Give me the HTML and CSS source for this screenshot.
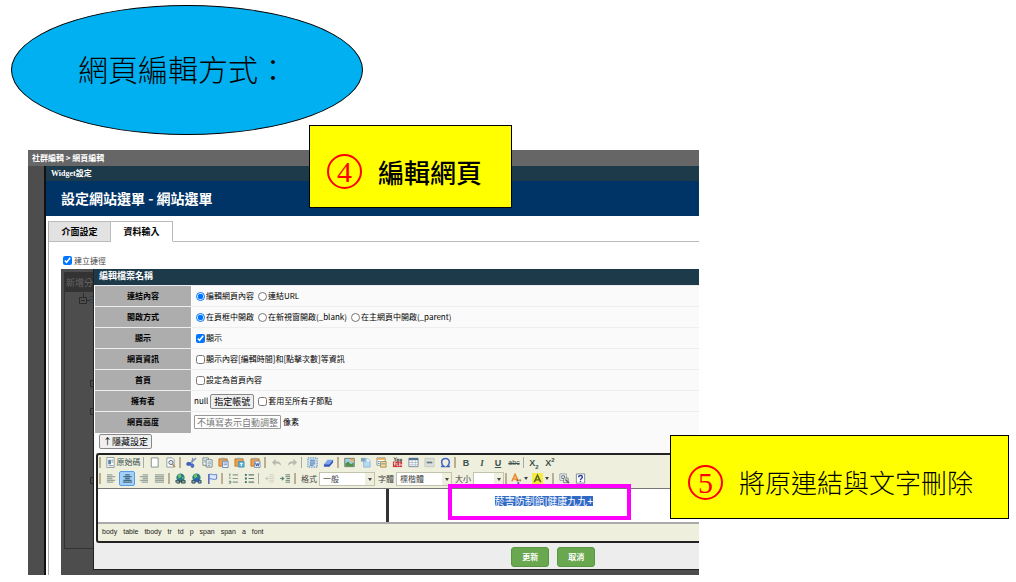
FILE: index.html
```html
<!DOCTYPE html>
<html lang="zh-Hant">
<head>
    <meta charset="UTF-8">
    <meta name="viewport" content="width=device-width, initial-scale=1.0">
    <title>網頁編輯方式</title>
    <link rel="stylesheet" href="styles.css">
</head>
<body>
    <!-- toolbar icons -->
    <svg class="sprite" aria-hidden="true">
        <symbol id="i-source" viewBox="0 0 12 12"><path d="M2 .5h8v11H2z" fill="#fff" stroke="#8b9a9a"/><path d="M3.500 3h3v5h-3z" fill="#5b86a8"/><path d="M7 3.500h2M7 5.500h2M4 9.500h5" stroke="#789"/></symbol>
        <symbol id="i-new" viewBox="0 0 12 12"><path d="M2.500 1h7.500v10h-7.500z" fill="#fff" stroke="#7d8c8c"/></symbol>
        <symbol id="i-preview" viewBox="0 0 12 12"><path d="M2 1h6l2 2v8H2z" fill="#fff" stroke="#8b9a9a"/><circle cx="6.500" cy="6" r="2.300" fill="#dde8ee" stroke="#667"/><path d="M8 8l3 3" stroke="#b08a50" stroke-width="1.600"/></symbol>
        <symbol id="i-cut" viewBox="0 0 12 12"><path d="M11 1L4 8M7.500 1L6 7" stroke="#7f93b8" stroke-width="1.500"/><ellipse cx="3" cy="7.500" rx="2" ry="1.400" fill="#4d70cb" stroke="#3358bd" stroke-width="1.500"/><ellipse cx="7" cy="9.500" rx="1.500" ry="2" fill="#4d70cb" stroke="#3358bd"/></symbol>
        <symbol id="i-copy" viewBox="0 0 12 12"><path d="M1 1h6v8H1z" fill="#fff" stroke="#6f8282"/><path d="M4.500 3h6.500v8H4.500z" fill="#fff" stroke="#6f8282"/><path d="M6 5.500h4M6 7.500h4M6 9.500h3M2 3.500h2M2 5.500h2" stroke="#6b8b9e"/></symbol>
        <symbol id="i-paste" viewBox="0 0 12 12"><path d="M1 2h9v8H1z" fill="#eba24b" stroke="#c27b2c"/><path d="M3.500.8h4v2h-4z" fill="#a5aab2"/><path d="M5 4.500h6v7H5z" fill="#fff" stroke="#5f7fb9"/><path d="M6 6.500h4M6 8.500h4" stroke="#5f7fb9"/></symbol>
        <symbol id="i-pastetext" viewBox="0 0 12 12"><path d="M1 2h9v8H1z" fill="#eba24b" stroke="#c27b2c"/><path d="M3.500.8h4v2h-4z" fill="#a5aab2"/><path d="M5 5h6v6H5z" fill="#5fb4d5" stroke="#4b93b5"/><path d="M6.500 7h3M8 7v3" stroke="#fff"/></symbol>
        <symbol id="i-pasteword" viewBox="0 0 12 12"><path d="M1 2h9v8H1z" fill="#eba24b" stroke="#c27b2c"/><path d="M3.500.8h4v2h-4z" fill="#a5aab2"/><path d="M5 4.500h6v7H5z" fill="#fff" stroke="#7c8fae"/><path d="M6 6l1 4 1-3 1 3 1-4" fill="none" stroke="#2f54a5"/></symbol>
        <symbol id="i-undo" viewBox="0 0 12 12"><path d="M5 2v2.500c4 0 6 1.500 6 5-1.500-2-3-2.500-6-2.500v2.500L1 6z" fill="#b5bbae"/></symbol>
        <symbol id="i-redo" viewBox="0 0 12 12"><path d="M7 2v2.500c-4 0-6 1.500-6 5 1.500-2 3-2.500 6-2.500v2.500L11 6z" fill="#b5bbae"/></symbol>
        <symbol id="i-selectall" viewBox="0 0 12 12"><path d="M1 1h10v10H1z" fill="#d9eafa" stroke="#4476a8" stroke-dasharray="1.500 1"/><path d="M3 3.500h6M3 5.500h6M3 7.500h6" stroke="#3d6f9f"/><path d="M3 9h4" stroke="#3d6f9f"/></symbol>
        <symbol id="i-eraser" viewBox="0 0 12 12"><path d="M1 8l4-5h6l-4 5z" fill="#7ea3ed"/><path d="M1 8h6l4-5v3L7 10.500H1z" fill="#3055bd"/></symbol>
        <symbol id="i-image" viewBox="0 0 12 12"><path d="M.8 1.500h10.400v9H.8z" fill="#9ed0e6" stroke="#75756a"/><path d="M1.500 10V7l3-2 3 3 3-2v4z" fill="#4c9445"/><path d="M7 2h3.500v3H7z" fill="#efb250"/></symbol>
        <symbol id="i-flash" viewBox="0 0 12 12"><path d="M4 2h5l2 2v7H4z" fill="#b5daf2" stroke="#8fbad8"/><path d="M1 1h5v4H1z" fill="#83a8bb"/><path d="M8 1.500v3h3z" fill="#fff"/></symbol>
        <symbol id="i-template" viewBox="0 0 12 12"><path d="M1 1h9v8H1z" fill="#fff" stroke="#8994a5"/><path d="M1 1h9v2H1z" fill="#e5ad4e"/><path d="M5 5h6v6H5z" fill="#f6df9c" stroke="#a58a4a"/><path d="M2 5h2M2 7h2M6 7.500h4" stroke="#5787b5"/></symbol>
        <symbol id="i-youtube" viewBox="0 0 12 12"><path d="M1 5h10v6H1z" fill="#cf3235"/><path d="M2 .5l1.500 2v2M5 .5l-1.500 2M5.500 2.500h2v2h-2zM9 2v2.500h1.500V2" fill="none" stroke="#444"/><path d="M2 6.500h2M3 6.500v3M5.500 6.500v3h1.500M8.500 6v4M10 7.500v2" stroke="#fff"/></symbol>
        <symbol id="i-table" viewBox="0 0 12 12"><path d="M1 1.500h10v9H1z" fill="#fff" stroke="#718499"/><path d="M1 1h10v2.500H1z" fill="#51708f"/><path d="M1 6h10M1 8.500h10M4.500 3v8M8 3v8" stroke="#a5b5bf" stroke-width=".8"/></symbol>
        <symbol id="i-rule" viewBox="0 0 12 12"><path d="M1 1.500h10v9H1z" fill="#dce0dc" stroke="#c2c8c2"/><path d="M3 6h6" stroke="#617878" stroke-width="1.800"/></symbol>
        <symbol id="i-omega" viewBox="0 0 12 12"><path d="M1 10.300h3.200C2.500 9 1.800 7.500 1.800 5.800 1.800 3.500 3.500 1.700 6 1.700s4.200 1.800 4.200 4.100c0 1.700-.7 3.200-2.400 4.500H11" fill="none" stroke="#4167c4" stroke-width="1.700"/></symbol>
        <symbol id="i-left" viewBox="0 0 12 12"><path d="M1 2h6M1 4h9M1 6h6M1 8h9M1 10h7" stroke="#98a69b" stroke-width="1.400"/></symbol>
        <symbol id="i-center" viewBox="0 0 12 12"><path d="M3.500 2h5M1.500 4h9M3.500 6h5M1.500 8h9M1 10h10" stroke="#456b80" stroke-width="1.400"/></symbol>
        <symbol id="i-right" viewBox="0 0 12 12"><path d="M5 2h6M2 4h9M5 6h6M2 8h9M4 10h7" stroke="#98a69b" stroke-width="1.400"/></symbol>
        <symbol id="i-justify" viewBox="0 0 12 12"><path d="M1 2h10M1 4h10M1 6h10M1 8h10M1 10h10" stroke="#98a69b" stroke-width="1.400"/></symbol>
        <symbol id="i-link" viewBox="0 0 12 12"><circle cx="6" cy="5" r="4.500" fill="#267c8d"/><path d="M3 2l3-1 1 3-3 2zM8 4l2 1-2 2z" fill="#73c75e"/><path d="M1 10V8h4v3H2zM7 11V8h4v3z" fill="#95a2a0" stroke="#284b4d"/><path d="M4 9.500h4" stroke="#284b4d"/></symbol>
        <symbol id="i-unlink" viewBox="0 0 12 12"><circle cx="6" cy="5" r="4.500" fill="#267c8d"/><path d="M3 2l3-1 1 3-3 2z" fill="#73c75e"/><path d="M1 10V8h3.500v3H1zM8 11V8h3v3z" fill="#95a2a0" stroke="#284b4d"/><path d="M5 6l3 4M8 6l-3 4" stroke="#2b58ca" stroke-width="1.500"/></symbol>
        <symbol id="i-flag" viewBox="0 0 12 12"><path d="M2 1v11" stroke="#4658b5" stroke-width="1.500"/><path d="M2.500 1.500c3-1 4 1.500 8 0v5c-4 1.500-5-1-8 0z" fill="#dce8ff" stroke="#5778cf"/></symbol>
        <symbol id="i-ol" viewBox="0 0 12 12"><path d="M2 .5v3M1 5.500h2M1 9h2v2H1" fill="none" stroke="#527c73"/><path d="M5 2h6M5 6h6M5 10h6" stroke="#8c9a8f" stroke-width="1.300"/></symbol>
        <symbol id="i-ul" viewBox="0 0 12 12"><path d="M1 1h2v2H1zM1 5h2v2H1zM1 9h2v2H1z" fill="#2f665b"/><path d="M5 2h6M5 6h6M5 10h6" stroke="#627b71" stroke-width="1.300"/></symbol>
        <symbol id="i-outdent" viewBox="0 0 12 12"><path d="M6 2h5M6 4h5M6 8h5M6 10h5M4 6h7" stroke="#cdd1c1"/><path d="M1 6l3-2.500v5z" fill="#c6cbbb"/></symbol>
        <symbol id="i-indent" viewBox="0 0 12 12"><path d="M6 2h5M6 4h5M7 6h4M6 8h5M6 10h5" stroke="#627b71"/><path d="M5 6L2 3.500v5z" fill="#598477"/><path d="M0 6h3" stroke="#598477"/></symbol>
        <symbol id="i-color" viewBox="0 0 12 12"><path d="M1 9L4.500 1.500 8 9M2.500 6.500h4" fill="none" stroke="#e98b32" stroke-width="1.800"/><path d="M6 7h2v2H6z" fill="#d93a35"/><path d="M9 7h2v2H9z" fill="#55a23c"/><path d="M7 10h2v2H7z" fill="#3c68cf"/></symbol>
        <symbol id="i-bgcolor" viewBox="0 0 12 12"><path d="M0 0h12v12H0z" fill="#f4ec3f"/><path d="M2.500 10L6 2.500 9.500 10M4 7.500h4" fill="none" stroke="#596425" stroke-width="1.600"/></symbol>
        <symbol id="i-blocks" viewBox="0 0 12 12"><path d="M1 1h7v7H1z" fill="#fff" stroke="#8b9a9a"/><path d="M3 3h3v3H3z" fill="none" stroke="#567"/><path d="M5 5.500h5v5H5z" fill="#e5e9df" stroke="#7b8683"/><path d="M7 7l4 4" stroke="#566" stroke-width="1.500"/></symbol>
        <symbol id="i-about" viewBox="0 0 12 12"><path d="M1.500 1h9v10h-9z" fill="#fff" stroke="#78858f"/><path d="M4 4.500c0-2.500 4-2.500 4 0C8 6 6 6 6 7.500M6 8.500v1.300" fill="none" stroke="#3443b0" stroke-width="1.600"/></symbol>
    </svg>

    <main class="slide">
        <h1 class="slide-title">網頁編輯方式：</h1>

        <section class="app">
            <div class="breadcrumb">社群編輯 &gt; 網頁編輯</div>
            <div class="widget">
                <div class="bar">Widget設定</div>
                <h2 class="heading">設定網站選單 - 網站選單</h2>
                <div class="panel">
                    <nav class="tabs">
                        <button type="button" class="tab">介面設定</button>
                        <button type="button" class="tab active">資料輸入</button>
                    </nav>
                    <label class="shortcut"><input type="checkbox" checked>建立捷徑</label>

                    <div class="overlay">
                        <div class="tree">
                            <div class="tree-title">新增分</div>
                            <svg class="nodes" width="28" height="200" fill="none" stroke="#2b2b2b">
                                <path d="M14.500 5.500h7v6h-7zM16 8.500h4M18.500 1v4M22 8.500h3"/>
                                <path d="M25 4.500h3M25 7.500h2M25 10.500h3" stroke="#2d4456"/>
                                <path d="M28 88.500h-2.500v6H28M28 116.500h-2.500v6H28M28 185.500h-2.500v6H28"/>
                            </svg>
                        </div>
                        <form class="dialog">
                            <div class="bar dialog-bar">編輯檔案名稱</div>
                            <table class="fields">
                                <tr>
                                    <th>連結內容</th>
                                    <td><div class="options">
                                        <label><input type="radio" name="content" checked>編輯網頁內容</label>
                                        <label><input type="radio" name="content">連結URL</label>
                                    </div></td>
                                </tr>
                                <tr>
                                    <th>開啟方式</th>
                                    <td><div class="options">
                                        <label><input type="radio" name="target" checked>在頁框中開啟</label>
                                        <label><input type="radio" name="target">在新視窗開啟(_blank)</label>
                                        <label><input type="radio" name="target">在主網頁中開啟(_parent)</label>
                                    </div></td>
                                </tr>
                                <tr>
                                    <th>顯示</th>
                                    <td><div class="options"><label><input type="checkbox" checked>顯示</label></div></td>
                                </tr>
                                <tr>
                                    <th>網頁資訊</th>
                                    <td><div class="options"><label><input type="checkbox">顯示內容[編輯時間]和[點擊次數]等資訊</label></div></td>
                                </tr>
                                <tr>
                                    <th>首頁</th>
                                    <td><div class="options"><label><input type="checkbox">設定為首頁內容</label></div></td>
                                </tr>
                                <tr>
                                    <th>擁有者</th>
                                    <td><div class="options">
                                        <span>null</span>
                                        <button type="button" class="btn">指定帳號</button>
                                        <label><input type="checkbox">套用至所有子節點</label>
                                    </div></td>
                                </tr>
                                <tr>
                                    <th><label for="height">網頁高度</label></th>
                                    <td><div class="options">
                                        <input type="text" id="height" class="height" placeholder="不填寫表示自動調整">
                                        <span>像素</span>
                                    </div></td>
                                </tr>
                            </table>
                            <div class="toggle"><button type="button" class="btn">↑隱藏設定</button></div>

                            <div class="editor">
                                <div class="toolbar">
                                    <div class="row">
                                        <i class="grip"></i>
                                        <button type="button" class="tool source"><svg><use href="#i-source"/></svg>原始碼</button>
                                        <i class="sep"></i>
                                        <button type="button" class="tool" aria-label="開新檔案"><svg><use href="#i-new"/></svg></button>
                                        <button type="button" class="tool" aria-label="預覽"><svg><use href="#i-preview"/></svg></button>
                                        <i class="grip"></i>
                                        <button type="button" class="tool" aria-label="剪下"><svg><use href="#i-cut"/></svg></button>
                                        <button type="button" class="tool" aria-label="複製"><svg><use href="#i-copy"/></svg></button>
                                        <button type="button" class="tool" aria-label="貼上"><svg><use href="#i-paste"/></svg></button>
                                        <button type="button" class="tool" aria-label="貼為文字"><svg><use href="#i-pastetext"/></svg></button>
                                        <button type="button" class="tool" aria-label="自 Word 貼上"><svg><use href="#i-pasteword"/></svg></button>
                                        <i class="grip"></i>
                                        <button type="button" class="tool" aria-label="復原"><svg><use href="#i-undo"/></svg></button>
                                        <button type="button" class="tool" aria-label="重複"><svg><use href="#i-redo"/></svg></button>
                                        <i class="sep"></i>
                                        <button type="button" class="tool" aria-label="全選"><svg><use href="#i-selectall"/></svg></button>
                                        <button type="button" class="tool" aria-label="清除格式"><svg><use href="#i-eraser"/></svg></button>
                                        <i class="grip"></i>
                                        <button type="button" class="tool" aria-label="影像"><svg><use href="#i-image"/></svg></button>
                                        <button type="button" class="tool" aria-label="Flash"><svg><use href="#i-flash"/></svg></button>
                                        <button type="button" class="tool" aria-label="樣版"><svg><use href="#i-template"/></svg></button>
                                        <button type="button" class="tool" aria-label="YouTube"><svg><use href="#i-youtube"/></svg></button>
                                        <button type="button" class="tool" aria-label="表格"><svg><use href="#i-table"/></svg></button>
                                        <button type="button" class="tool" aria-label="水平線"><svg><use href="#i-rule"/></svg></button>
                                        <button type="button" class="tool" aria-label="特殊符號"><svg><use href="#i-omega"/></svg></button>
                                        <i class="grip"></i>
                                        <button type="button" class="tool"><b>B</b></button>
                                        <button type="button" class="tool italic"><b>I</b></button>
                                        <button type="button" class="tool"><b><u>U</u></b></button>
                                        <button type="button" class="tool strike"><s>abc</s></button>
                                        <i class="sep"></i>
                                        <button type="button" class="tool"><b>X<sub>2</sub></b></button>
                                        <button type="button" class="tool"><b>X<sup>2</sup></b></button>
                                    </div>
                                    <div class="row">
                                        <i class="grip"></i>
                                        <button type="button" class="tool" aria-label="靠左"><svg><use href="#i-left"/></svg></button>
                                        <button type="button" class="tool on" aria-label="置中"><svg><use href="#i-center"/></svg></button>
                                        <button type="button" class="tool" aria-label="靠右"><svg><use href="#i-right"/></svg></button>
                                        <button type="button" class="tool" aria-label="左右對齊"><svg><use href="#i-justify"/></svg></button>
                                        <i class="grip"></i>
                                        <button type="button" class="tool" aria-label="超連結"><svg><use href="#i-link"/></svg></button>
                                        <button type="button" class="tool" aria-label="移除超連結"><svg><use href="#i-unlink"/></svg></button>
                                        <button type="button" class="tool" aria-label="錨點"><svg><use href="#i-flag"/></svg></button>
                                        <i class="grip"></i>
                                        <button type="button" class="tool" aria-label="編號清單"><svg><use href="#i-ol"/></svg></button>
                                        <button type="button" class="tool" aria-label="項目清單"><svg><use href="#i-ul"/></svg></button>
                                        <i class="sep"></i>
                                        <button type="button" class="tool" aria-label="減少縮排"><svg><use href="#i-outdent"/></svg></button>
                                        <button type="button" class="tool" aria-label="增加縮排"><svg><use href="#i-indent"/></svg></button>
                                        <i class="grip"></i>
                                        <label class="combo">格式<span class="box"><select><option>一般</option></select></span></label>
                                        <label class="combo">字體<span class="box"><select><option>標楷體</option></select></span></label>
                                        <label class="combo">大小<span class="box small"><select><option></option></select></span></label>
                                        <i class="grip"></i>
                                        <button type="button" class="tool menu" aria-label="文字顏色"><svg><use href="#i-color"/></svg></button>
                                        <button type="button" class="tool menu" aria-label="背景顏色"><svg><use href="#i-bgcolor"/></svg></button>
                                        <i class="grip"></i>
                                        <button type="button" class="tool" aria-label="顯示區塊"><svg><use href="#i-blocks"/></svg></button>
                                        <button type="button" class="tool" aria-label="關於"><svg><use href="#i-about"/></svg></button>
                                    </div>
                                </div>
                                <div class="canvas">
                                    <div class="cell"></div>
                                    <div class="cell selected">
                                        <a href="#">菸害防制館|健康九九+</a>
                                        <span class="marker"></span>
                                    </div>
                                </div>
                                <nav class="path">
                                    <a href="#">body</a><a href="#">table</a><a href="#">tbody</a><a href="#">tr</a><a href="#">td</a><a href="#">p</a><a href="#">span</a><a href="#">span</a><a href="#">a</a><a href="#">font</a>
                                </nav>
                            </div>
                            <div class="actions">
                                <button type="submit">更新</button>
                                <button type="button">取消</button>
                            </div>
                        </form>
                    </div>
                </div>
            </div>
        </section>

        <div class="callout step-edit"><span class="num">4</span><strong>編輯網頁</strong></div>
        <div class="callout step-delete"><span class="num">5</span><span>將原連結與文字刪除</span></div>
    </main>
</body>
</html>
```
FILE: styles.css
```css
* {
    box-sizing: border-box;
}

body {
    margin: 0;
    background: #fff;
    color: #000;
    font-family: "Noto Sans CJK TC", sans-serif;
    font-size: 8px;
    line-height: 12px;
}

button, input, select {
    font: inherit;
    color: inherit;
    margin: 0;
}

.sprite {
    display: none;
}

.slide {
    position: relative;
    padding: 5px 0 7px;
}

.slide-title {
    display: flex;
    align-items: center;
    justify-content: center;
    width: 352px;
    height: 130px;
    margin: 0 0 15px 11px;
    padding: 0 8px 4px 0;
    border: 1px solid #000;
    border-radius: 50%;
    background: #00b0f0;
    font-size: 30px;
    font-weight: 300;
    line-height: 40px;
}

/* application window */
.app {
    width: 66%;
    margin-left: 28px;
    background: #4d4d4d;
}

.breadcrumb {
    height: 16px;
    padding: 0 4px;
    background: #666;
    color: #fff;
    font-weight: bold;
    line-height: 16px;
}

.widget {
    margin-left: 16px;
    border-left: 2px solid #111;
    background: #fff;
}

.bar {
    height: 15px;
    padding-left: 5px;
    background: #1d3a4b;
    color: #fff;
    font-family: "Liberation Serif", "Noto Sans CJK TC", serif;
    font-weight: bold;
    line-height: 15px;
}

.heading {
    height: 35px;
    margin: 0;
    padding-left: 15px;
    background: #036;
    color: #fff;
    font-size: 14px;
    line-height: 35px;
}

.panel {
    margin: 5px 0 0 2px;
    border-left: 1px solid #aaa;
}

.tabs {
    display: flex;
    height: 21px;
    border-bottom: 1px solid #bbb;
}

.tab {
    width: 62px;
    height: 21px;
    padding: 0;
    border: 1px solid #bbb;
    border-left: 0;
    background: #e2e2e2;
    font-size: 9px;
    font-weight: bold;
}

.tab.active {
    border-bottom-color: #fff;
    background: #fff;
}

.shortcut {
    display: flex;
    align-items: center;
    gap: 2px;
    height: 27px;
    padding: 10px 0 0 14px;
    color: #444;
}

input[type="checkbox"],
input[type="radio"] {
    flex: none;
    width: 9px;
    height: 9px;
}

.overlay {
    display: flex;
    margin-left: 12px;
    padding-bottom: 5px;
    background: #4d4d4d;
}

.tree {
    flex: none;
    width: 29px;
    margin: 3px 0 21px 3px;
    border: 1px solid #333;
    border-right: 0;
    white-space: nowrap;
}

.tree-title {
    height: 19px;
    padding-left: 1px;
    background: #333;
    color: #666;
    font-size: 9px;
    line-height: 20px;
}

.nodes {
    display: block;
}

/* dialog */
.dialog {
    flex: 1;
    min-width: 0;
    border-left: 1px solid #222;
    border-bottom: 1px solid #222;
    background: #fafafa;
}

.dialog-bar {
    height: 16px;
    font-size: 9px;
}

.fields {
    width: 100%;
    border-collapse: collapse;
}

.fields th,
.fields td {
    height: 21px;
    padding: 0;
    border-top: 1px solid #eee;
}

.fields th {
    width: 97px;
    border-right: 1px solid #fff;
    border-left: 1px solid #fff;
    background: #adadad;
    text-align: center;
}

.fields td {
    padding-left: 2px;
}

.options {
    display: flex;
    align-items: center;
    gap: 2px;
    height: 20px;
}

.options label {
    display: flex;
    align-items: center;
    gap: 1px;
    padding-left: 2px;
}

.btn {
    height: 15px;
    padding: 0 3px;
    border: 1px solid #888;
    border-radius: 2px;
    background: #efefef;
    font-size: 9px;
    line-height: 13px;
    white-space: nowrap;
}

.height {
    width: 87px;
    height: 14px;
    padding: 0 2px;
    border: 1px solid #999;
    border-radius: 1px;
    background: #fff;
    font-size: 9px;
}

.height::placeholder {
    color: #777;
}

.toggle {
    height: 20px;
    padding: 1px 5px;
}

/* rich text editor */
.editor {
    margin-left: 2px;
    border: 2px solid #222;
    border-right: 0;
    border-radius: 3px 0 0 3px;
    background: #efefde;
}

.toolbar {
    height: 34px;
    border-bottom: 1px solid #777;
}

.row {
    display: flex;
    align-items: center;
    height: 16px;
}

.grip,
.sep {
    flex: none;
    width: 2px;
    height: 11px;
    margin: 0 2px 0 1px;
    background: #b9ae92;
}

.sep {
    width: 1px;
    background: #aaa;
}

.tool {
    display: flex;
    flex: none;
    align-items: center;
    justify-content: center;
    width: 16px;
    height: 15px;
    padding: 0;
    border: 0;
    border-radius: 2px;
    background: none;
    color: #3c5450;
    font-family: "Liberation Sans", "Noto Sans CJK TC", sans-serif;
    font-size: 9px;
}

.tool svg {
    flex: none;
    width: 11px;
    height: 11px;
}

.tool.source {
    gap: 1px;
    width: 39px;
    font-size: 8px;
}

.tool.on {
    border: 1px solid #5c9be0;
    background: #a3d0fa;
}

.tool.italic {
    font-family: "Liberation Serif", serif;
    font-style: italic;
}

.tool.strike {
    font-size: 7px;
}

.tool sub,
.tool sup {
    font-size: 6px;
    line-height: 0;
}

.tool.menu {
    width: 21px;
    gap: 2px;
}

.tool.menu::after,
.box::after {
    content: "";
    border: 2px solid transparent;
    border-top: 3px solid #444;
    border-bottom: 0;
}

.combo {
    display: flex;
    align-items: center;
    gap: 2px;
    padding-left: 3px;
    color: #444;
}

.box {
    position: relative;
    width: 56px;
    height: 14px;
    border: 1px solid #c4c4ae;
    background: #fff;
}

.box.small {
    width: 31px;
}

.box select {
    display: block;
    width: 100%;
    height: 12px;
    padding: 0 12px 0 3px;
    border: 0;
    background: linear-gradient(#efefde, #efefde) right / 9px 100% no-repeat;
    appearance: none;
    line-height: 12px;
}

.box::after {
    position: absolute;
    top: 5px;
    right: 2px;
}

.canvas {
    display: flex;
    height: 35px;
    border-bottom: 2px solid #aaa;
    background: #fff;
}

.cell {
    width: 48%;
}

.cell.selected {
    position: relative;
    flex: 1;
    padding-top: 7px;
    border-left: 3px solid #333;
    text-align: center;
}

.selected a {
    background: #316ac5;
    color: #fff;
    font-family: "Liberation Sans", "Noto Sans CJK TC", sans-serif;
    font-size: 10px;
}

/* frame drawn over the selected link */
.marker {
    position: absolute;
    top: -5px;
    left: 59px;
    width: 183px;
    height: 36px;
    border: 4px solid #f0f;
}

.path {
    display: flex;
    gap: 6px;
    height: 17px;
    padding-left: 4px;
    font-family: "Liberation Sans", sans-serif;
    font-size: 7px;
    line-height: 15px;
}

.path a {
    color: #222;
    text-decoration: none;
}

.actions {
    display: flex;
    justify-content: center;
    gap: 8px;
    padding: 4px 0 2px 314px;
    background: #ededed;
}

.actions button {
    width: 38px;
    height: 20px;
    padding: 0;
    border: 1px solid #5a9641;
    border-radius: 3px;
    background: #6aa84f;
    color: #fff;
    font-weight: bold;
}

/* step callouts */
.callout {
    position: absolute;
    display: flex;
    align-items: center;
    gap: 16px;
    padding: 10px 17px 0;
    border: 1px solid #000;
    background: #ff0;
    font-size: 26px;
    font-weight: 300;
    line-height: 36px;
    white-space: nowrap;
}

.callout strong {
    font-weight: 500;
}

.step-edit {
    top: 125px;
    left: 309px;
    width: 203px;
    height: 83px;
}

.step-delete {
    top: 435px;
    left: 670px;
    right: 7px;
    height: 84px;
}

.num {
    width: 35px;
    height: 35px;
    border: 2px solid #f00;
    border-radius: 50%;
    color: #f00;
    font-family: "Liberation Serif", serif;
    font-size: 30px;
    font-weight: 400;
    line-height: 31px;
    text-align: center;
}
```
